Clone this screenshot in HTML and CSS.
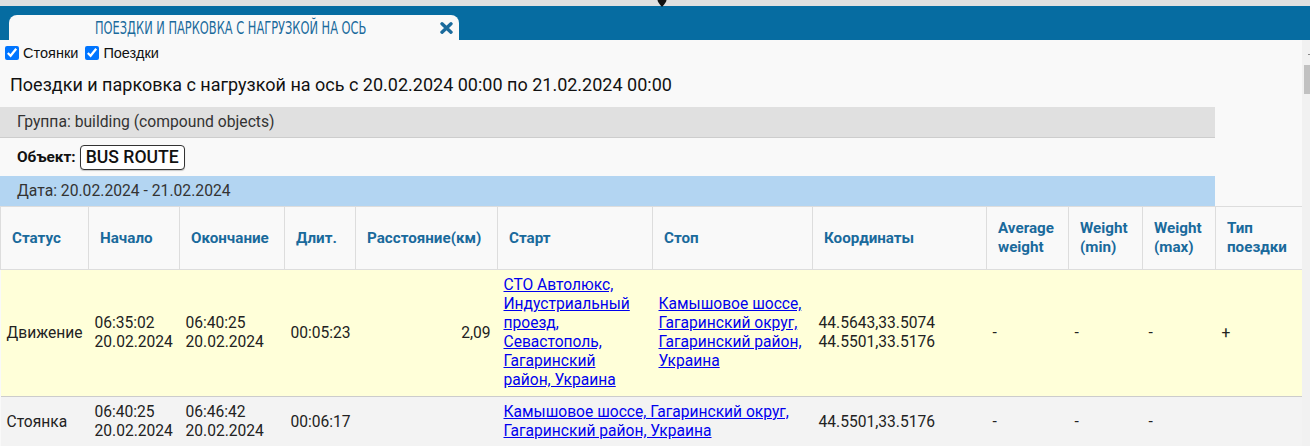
FILE: index.html
```html
<!DOCTYPE html>
<html lang="ru">
<head>
  <meta charset="UTF-8">
  <title>Поездки и парковка с нагрузкой на ось</title>
  <link rel="stylesheet" href="styles.css">
</head>
<body>

  <div class="topstrip">
    <svg class="pin" width="10" height="7" viewBox="0 0 10 7"><path d="M0.5 0 H9.5 Q9.5 2 5 7 Q0.5 2 0.5 0 Z" fill="#111"/></svg>
  </div>

  <div class="tabbar">
    <div class="tab">
      <div class="tab-title"><span>ПОЕЗДКИ И ПАРКОВКА С НАГРУЗКОЙ НА ОСЬ</span></div>
      <svg class="tab-close" width="13" height="12" viewBox="0 0 13 12">
        <path d="M2 1.8 L11 10.2 M11 1.8 L2 10.2" stroke="#1a6a9c" stroke-width="3.4" stroke-linecap="round"/>
      </svg>
    </div>
  </div>

  <div class="workspace">
    <div class="report">

      <div class="filters">
        <label><input type="checkbox" checked> Стоянки</label><label><input type="checkbox" checked> Поездки</label>
      </div>

      <div class="report-title">Поездки и парковка с нагрузкой на ось с 20.02.2024 00:00 по 21.02.2024 00:00</div>

      <div class="band band-group">Группа: building (compound objects)</div>
      <div class="object-row">
        <b>Объект:</b>
        <span class="object-chip">BUS ROUTE</span>
      </div>
      <div class="band band-date">Дата: 20.02.2024 - 21.02.2024</div>

      <table class="trips">
        <colgroup>
          <col style="width:88px"><col style="width:91px"><col style="width:105px"><col style="width:71px">
          <col style="width:142px"><col style="width:155px"><col style="width:160px"><col style="width:174px">
          <col style="width:82px"><col style="width:74px"><col style="width:73px"><col style="width:87px">
        </colgroup>
        <thead>
          <tr>
            <th>Статус</th>
            <th>Начало</th>
            <th>Окончание</th>
            <th>Длит.</th>
            <th>Расстояние(км)</th>
            <th>Старт</th>
            <th>Стоп</th>
            <th>Координаты</th>
            <th>Average weight</th>
            <th>Weight (min)</th>
            <th>Weight (max)</th>
            <th>Тип поездки</th>
          </tr>
        </thead>
        <tbody>
          <tr class="row-move">
            <td>Движение</td>
            <td>06:35:02<br>20.02.2024</td>
            <td>06:40:25<br>20.02.2024</td>
            <td>00:05:23</td>
            <td class="num">2,09</td>
            <td><a href="#">СТО Автолюкс, Индустриальный проезд, Севастополь, Гагаринский район, Украина</a></td>
            <td><a href="#">Камышовое шоссе, Гагаринский округ, Гагаринский район, Украина</a></td>
            <td>44.5643,33.5074<br>44.5501,33.5176</td>
            <td>-</td>
            <td>-</td>
            <td>-</td>
            <td>+</td>
          </tr>
          <tr class="row-stop">
            <td>Стоянка</td>
            <td>06:40:25<br>20.02.2024</td>
            <td>06:46:42<br>20.02.2024</td>
            <td>00:06:17</td>
            <td class="num"></td>
            <td colspan="2"><a href="#">Камышовое шоссе, Гагаринский округ, Гагаринский район, Украина</a></td>
            <td>44.5501,33.5176</td>
            <td>-</td>
            <td>-</td>
            <td>-</td>
            <td></td>
          </tr>
        </tbody>
      </table>

    </div>
    <div class="scrollbar">
      <span class="scroll-arrow"></span>
      <span class="scroll-thumb"></span>
    </div>
  </div>

</body>
</html>
```

FILE: styles.css
```css
html, body {
  margin: 0;
  height: 100%;
  overflow: hidden;
}
body {
  font-family: Roboto, "Liberation Sans", sans-serif;
  background: #f9f9f9;
  color: #222;
}

/* top strip + tab bar */
.topstrip {
  height: 6px;
  background: #e0e0e0;
  padding-left: 657px;
}
.pin {
  display: block;
}
.tabbar {
  background: #066ca1;
  height: 34px;
  padding: 9px 0 0 9px;
  box-sizing: border-box;
}
.tab {
  width: 450px;
  height: 25px;
  background: #f9f9f9;
  border-radius: 8px 8px 0 0;
  display: flex;
  align-items: center;
  padding: 0 6px 0 86px;
  box-sizing: border-box;
}
.tab-title {
  flex: 1;
  min-width: 0;
  overflow: visible;
  white-space: nowrap;
}
.tab-title span {
  display: inline-block;
  font-family: "Liberation Sans Narrow", "DejaVu Sans Condensed", "Liberation Sans", sans-serif;
  font-size: 18px;
  color: #1a6a9c;
  transform: scaleX(0.705);
  transform-origin: left center;
}
.tab-close {
  flex-shrink: 0;
}

/* report area */
.workspace {
  display: flex;
  height: calc(100% - 40px);
}
.report {
  flex: 1;
  overflow: hidden;
}
.scrollbar {
  width: 8px;
  background: #f1f1f1;
  display: flex;
  flex-direction: column;
  align-items: flex-end;
}
.scroll-arrow {
  margin-top: 14px;
  width: 2px;
  height: 1px;
  background: #888;
}
.scroll-thumb {
  margin-top: 10px;
  width: 6px;
  height: 29px;
  background: #c1c1c1;
}

.filters {
  padding-top: 4px;
  height: 18px;
  font-family: "Liberation Sans", Arial, sans-serif;
  font-size: 14.5px;
  line-height: 18px;
  color: #111;
}
.filters label + label {
  margin-left: 2px;
}
.filters input {
  margin: 0 0 0 5px;
  width: 14px;
  height: 14px;
  vertical-align: -2px;
}
.report-title {
  padding: 10px;
  font-size: 18px;
  line-height: 25px;
  color: #111;
}

.band {
  width: 1215px;
  height: 30px;
  line-height: 30px;
  padding-left: 17px;
  box-sizing: border-box;
  font-size: 15.7px;
  color: #333;
}
.band-group {
  height: 31px;
  background: #e0e0e0;
  border-bottom: 1px solid #cdcdcd;
}
.band-date {
  background: #b3d5f2;
}
.object-row {
  height: 38px;
  display: flex;
  align-items: center;
  padding-left: 17px;
  font-size: 15.4px;
  color: #111;
}
.object-chip {
  margin-left: 4px;
  padding: 0 5px;
  height: 23px;
  line-height: 23px;
  border: 1px solid #333;
  border-radius: 4px;
  background: #fff;
  font-size: 17.6px;
  font-weight: 500;
  box-shadow: 0 1px 1px rgba(0, 0, 0, 0.2);
}

/* trips table */
.trips {
  width: 1302px;
  table-layout: fixed;
  border-collapse: collapse;
  font-size: 15.6px;
  line-height: 19px;
}
.trips th {
  padding: 12px 12px 12px 11px;
  text-align: left;
  vertical-align: middle;
  font-size: 15.2px;
  font-weight: bold;
  color: #1a6a9c;
  border: 1px solid #dddddd;
  background: #f9f9f9;
}
.trips td {
  padding: 6px 7px 6px 6px;
  vertical-align: middle;
  color: #222;
}
.trips td.num {
  text-align: right;
}
.trips tbody tr {
  border-top: 1px solid #cccccc;
}
.row-move {
  background: #ffffd9;
}
.row-stop {
  background: #f3f3f3;
}
.trips a {
  color: #0000ee;
}
```
